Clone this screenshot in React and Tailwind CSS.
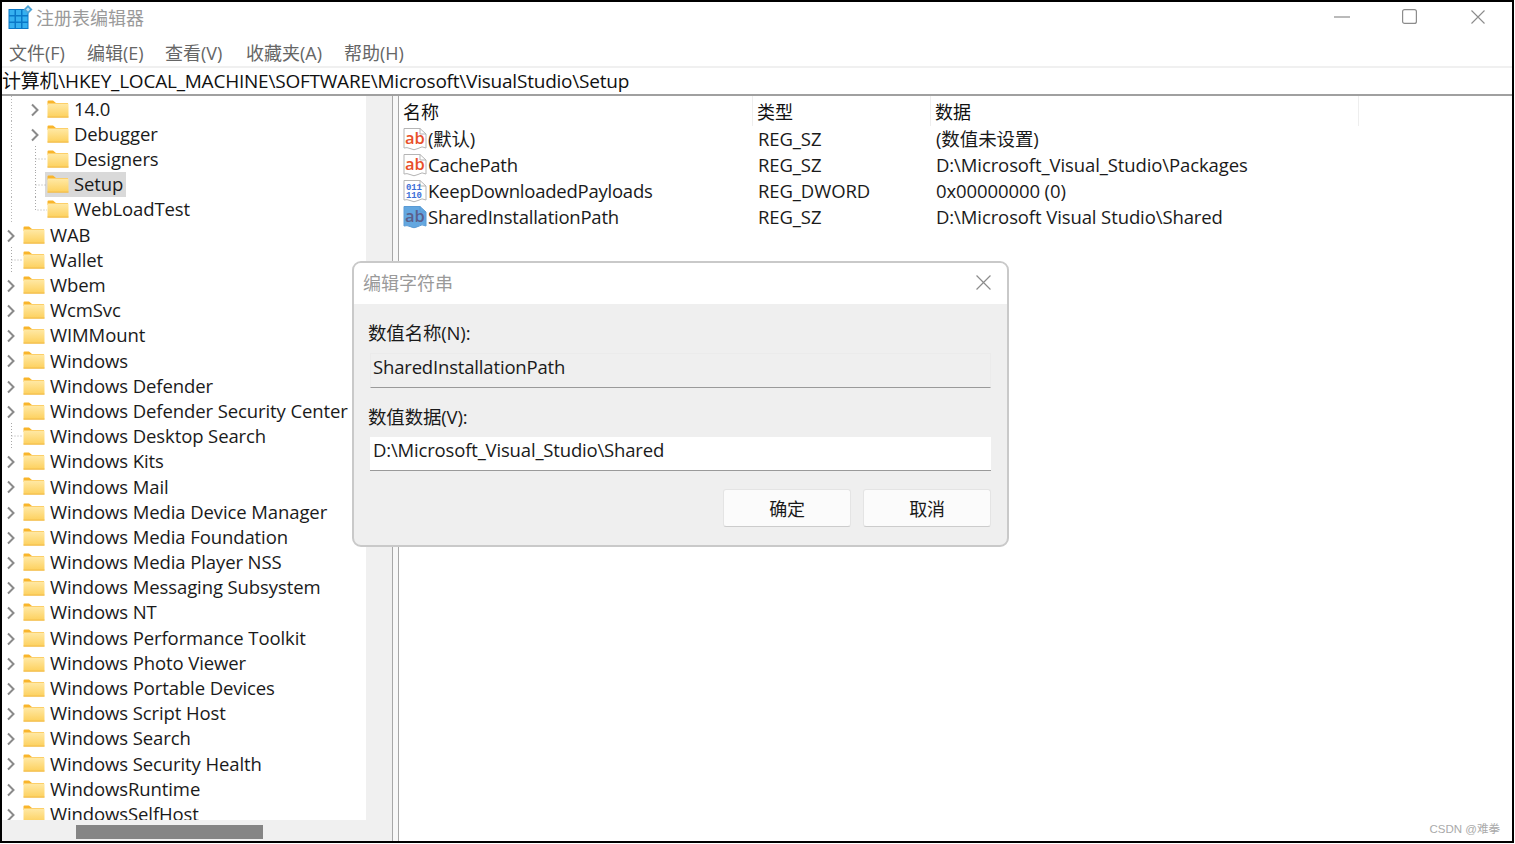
import React from "react";

const roots = ["WAB","Wallet","Wbem","WcmSvc","WIMMount","Windows","Windows Defender","Windows Defender Security Center","Windows Desktop Search","Windows Kits","Windows Mail","Windows Media Device Manager","Windows Media Foundation","Windows Media Player NSS","Windows Messaging Subsystem","Windows NT","Windows Performance Toolkit","Windows Photo Viewer","Windows Portable Devices","Windows Script Host","Windows Search","Windows Security Health","WindowsRuntime","WindowsSelfHost"];
const leaves = new Set(["Wallet","Windows Desktop Search"]);

function Folder() {
  return (
    <svg width="22" height="18" viewBox="0 0 22 18" className="shrink-0">
      <defs>
        <linearGradient id="fg" x1="0" y1="0" x2="0" y2="1">
          <stop offset="0" stopColor="#ffe9a6" />
          <stop offset="1" stopColor="#fdd05c" />
        </linearGradient>
      </defs>
      <path d="M0.5 1.5 Q0.5 0.5 1.5 0.5 H6 L9 3 H21 V5 H0.5Z" fill="#f9b52b" />
      <rect x="0.5" y="3.5" width="21" height="14" rx="0.5" fill="url(#fg)" />
      <rect x="0.5" y="16.6" width="21" height="1" fill="#f0b848" />
    </svg>
  );
}

function Chevron() {
  return (
    <svg width="10" height="14" viewBox="0 0 10 14" className="shrink-0 mt-[2px]">
      <path d="M2 1.5 L7.5 7 L2 12.5" fill="none" stroke="#8a8a8a" strokeWidth="2" />
    </svg>
  );
}

function Cell({ kind }) {
  return (
    <div className="w-[21px] h-full shrink-0 relative flex items-center justify-start pl-[4px]">
      {kind === "chevron" ? <Chevron /> : (
        <svg width="21" height="26" viewBox="0 0 21 26" className="absolute left-0 top-0">
          <path d={kind === "last" ? "M9.5 0 V13 H21" : "M9.5 0 V26 M9.5 13 H21"} fill="none" stroke="#a8a8a8" strokeWidth="1" strokeDasharray="1 2" />
        </svg>
      )}
    </div>
  );
}

function Guide() {
  return (
    <div className="w-[24px] h-full shrink-0">
      <svg width="24" height="26" viewBox="0 0 24 26">
        <path d="M9.5 0 V26" fill="none" stroke="#b8b8b8" strokeWidth="1" strokeDasharray="1 2" />
      </svg>
    </div>
  );
}

function Row({ name, child, kind, selected }) {
  return (
    <div className="h-[25.2px] flex items-center shrink-0 text-[18.5px] tracking-[-0.1px] text-[#1a1a1a] whitespace-nowrap">
      {child && <Guide />}
      <Cell kind={kind} />
      <div className={selected ? "flex items-center h-full bg-[#d9d9d9] pl-[2px] -ml-[2px] pr-[3px]" : "flex items-center h-full"}>
        <Folder />
        <span className="ml-[5px]">{name}</span>
      </div>
    </div>
  );
}

function AbIcon({ blue }) {
  return (
    <svg width="24" height="25" viewBox="0 0 24 25" className="shrink-0">
      <path d="M1 1.5 H17 L23 7 V21 Q19 18.5 15 21.5 Q11 24 7 21.5 Q4 20 1 21Z" fill={blue ? "#63a7e0" : "#fff"} stroke={blue ? "#5a9bd5" : "#b5b5b5"} strokeWidth="1" />
      <path d="M17 1.5 V7 H23" fill="none" stroke={blue ? "#5a9bd5" : "#b5b5b5"} strokeWidth="1" />
      <text x="2" y="16.5" fontSize="16.5" fontWeight="600" fontFamily="'Open Sans',sans-serif" fill={blue ? "#5b5f8c" : "#e8502b"}>ab</text>
    </svg>
  );
}

function BinIcon() {
  return (
    <svg width="24" height="25" viewBox="0 0 24 25" className="shrink-0">
      <path d="M1 1.5 H17 L23 7 V21 Q19 18.5 15 21.5 Q11 24 7 21.5 Q4 20 1 21Z" fill="#fff" stroke="#b5b5b5" strokeWidth="1" />
      <path d="M17 1.5 V7 H23" fill="none" stroke="#b5b5b5" strokeWidth="1" />
      <text x="3" y="11" fontSize="9" fontWeight="700" fontFamily="'Liberation Mono',monospace" fill="#3b6fd8">011</text>
      <text x="3" y="18.5" fontSize="9" fontWeight="700" fontFamily="'Liberation Mono',monospace" fill="#3b6fd8">110</text>
    </svg>
  );
}

const values = [
  { icon: <AbIcon />, name: "(默认)", type: "REG_SZ", data: "(数值未设置)" },
  { icon: <AbIcon />, name: "CachePath", type: "REG_SZ", data: "D:\\Microsoft_Visual_Studio\\Packages" },
  { icon: <BinIcon />, name: "KeepDownloadedPayloads", type: "REG_DWORD", data: "0x00000000 (0)" },
  { icon: <AbIcon blue />, name: "SharedInstallationPath", type: "REG_SZ", data: "D:\\Microsoft Visual Studio\\Shared" },
];

function Logo() {
  return (
    <svg width="25" height="25" viewBox="0 0 25 25" className="shrink-0">
      <rect x="0.5" y="4" width="20" height="20" fill="#0a78c8" />
      <g fill="#35b0f0">
        <rect x="1.5" y="5" width="5" height="5" /><rect x="8" y="5" width="5" height="5" /><rect x="14.5" y="5" width="5" height="5" />
        <rect x="1.5" y="11.5" width="5" height="5" /><rect x="8" y="11.5" width="5" height="5" /><rect x="14.5" y="11.5" width="5" height="5" />
        <rect x="1.5" y="18" width="5" height="5" /><rect x="8" y="18" width="5" height="5" /><rect x="14.5" y="18" width="5" height="5" />
      </g>
      <path d="M20 0 L24.5 4.5 L20 9 L15.5 4.5Z" fill="#4aa3d8" />
      <path d="M20 2.5 L22 4.5 L20 6.5 L18 4.5Z" fill="#bfe3f5" />
    </svg>
  );
}

function X({ size = 14, color = "#8c8c8c" }) {
  return (
    <svg width={size} height={size} viewBox="0 0 14 14">
      <path d="M0.5 0.5 L13.5 13.5 M13.5 0.5 L0.5 13.5" stroke={color} strokeWidth="1.1" fill="none" />
    </svg>
  );
}

export default function App() {
  return (
    <div className="w-[1514px] h-[843px] border-2 border-black bg-white flex flex-col overflow-hidden relative [font-family:'Open_Sans','Noto_Sans_CJK_SC',sans-serif]">
      <div className="h-[33px] shrink-0 flex items-center pl-[6px] pb-[2px] text-[18px] text-[#9a9a9a] [font-family:'Noto_Sans_CJK_SC',sans-serif]">
        <Logo />
        <span className="ml-[3px]">注册表编辑器</span>
        <div className="ml-auto flex items-center pr-[27px] mb-[2px]">
          <svg width="16" height="14" viewBox="0 0 16 14"><path d="M0 7 H16" stroke="#8c8c8c" strokeWidth="1.2" /></svg>
          <svg width="15" height="15" viewBox="0 0 15 15" className="ml-[52px]"><rect x="0.6" y="0.6" width="13.8" height="13.8" rx="2" fill="none" stroke="#8c8c8c" strokeWidth="1.2" /></svg>
          <div className="ml-[54px] flex"><X /></div>
        </div>
      </div>
      <div className="h-[33px] shrink-0 flex items-center pl-[7px] pt-[5px] text-[18px] text-[#666] border-b-2 border-[#f0f0f0]">
        <span className="w-[78px]">文件(F)</span>
        <span className="w-[78px]">编辑(E)</span>
        <span className="w-[81px]">查看(V)</span>
        <span className="w-[98px]">收藏夹(A)</span>
        <span>帮助(H)</span>
      </div>
      <div className="h-[28px] shrink-0 flex items-center pt-[1px] text-[19px] tracking-[-0.22px] text-[#111] border-b-2 border-[#a0a0a0] whitespace-nowrap">
        计算机\HKEY_LOCAL_MACHINE\SOFTWARE\Microsoft\VisualStudio\Setup
      </div>
      <div className="flex-1 flex min-h-0">
        <div className="w-[364px] flex flex-col shrink-0 min-h-0">
          <div className="flex-1 flex flex-col overflow-hidden min-h-0">
            <Row name="14.0" child kind="chevron" />
            <Row name="Debugger" child kind="chevron" />
            <Row name="Designers" child kind="tee" />
            <Row name="Setup" child kind="tee" selected />
            <Row name="WebLoadTest" child kind="last" />
            {roots.map((r) => (
              <Row key={r} name={r} kind={leaves.has(r) ? "tee" : "chevron"} />
            ))}
          </div>
          <div className="h-[21px] shrink-0 bg-[#f0f0f0] pt-[5px] pl-[74px]">
            <div className="w-[187px] h-[14px] bg-[#858585]" />
          </div>
        </div>
        <div className="w-[27px] shrink-0 bg-[#f0f0f0] border-r border-[#a8a8a8]" />
        <div className="w-[6px] shrink-0 bg-[#f8f8f8] border-r border-[#a8a8a8]" />
        <div className="flex-1 flex flex-col min-w-0">
          <div className="h-[30px] flex items-center text-[18px] text-[#111] [font-family:'Noto_Sans_CJK_SC',sans-serif]">
            <div className="w-[354px] pl-[4px] pt-[1px] border-r border-[#eeeeee] h-full flex items-center">名称</div>
            <div className="w-[178px] pl-[4px] pt-[1px] border-r border-[#eeeeee] h-full flex items-center">类型</div>
            <div className="w-[428px] pl-[4px] pt-[1px] border-r border-[#eeeeee] h-full flex items-center">数据</div>
          </div>
          {values.map((v) => (
            <div key={v.name} className="h-[26px] flex items-center text-[18.5px] tracking-[-0.1px] text-[#1a1a1a] whitespace-nowrap">
              <div className="w-[354px] pl-[4px] flex items-center">
                {v.icon}
                <span className="ml-[1px] tracking-[-0.23px]">{v.name}</span>
              </div>
              <div className="w-[178px] pl-[5px]">{v.type}</div>
              <div className="pl-[5px]">{v.data}</div>
            </div>
          ))}
        </div>
      </div>

      <div className="absolute left-[350px] top-[259px] w-[657px] h-[286px] rounded-[9px] border-2 border-[#c9c9c9] bg-[#efefef] overflow-hidden flex flex-col text-[#1a1a1a]">
        <div className="h-[41px] bg-white flex items-center justify-between pl-[9px] pr-[16px] pb-[3px] shrink-0 text-[18px] text-[#9a9a9a] [font-family:'Noto_Sans_CJK_SC',sans-serif]">
          <span>编辑字符串</span>
          <X size={15} />
        </div>
        <div className="flex-1 flex flex-col px-[16px] tracking-[-0.17px]">
          <div className="mt-[16px] h-[26px] -ml-[2px] flex items-center text-[18.5px]">数值名称(N):</div>
          <div className="mt-[7px] h-[35px] shrink-0 flex items-center pl-[2px] pb-[8px] text-[18.5px] border border-[#ebebeb] border-b-[#9a9a9a] bg-[#efefef]">SharedInstallationPath</div>
          <div className="mt-[16px] h-[26px] -ml-[2px] flex items-center text-[18.5px]">数值数据(V):</div>
          <div className="mt-[7px] h-[34px] shrink-0 flex items-center pl-[3px] pb-[7px] text-[18.5px] bg-white border-b border-[#9a9a9a]">D:\Microsoft_Visual_Studio\Shared</div>
          <div className="mt-[18px] flex justify-end gap-[12px] text-[18px] [font-family:'Noto_Sans_CJK_SC',sans-serif]">
            <div className="w-[128px] h-[38px] rounded-[3px] bg-[#fbfbfb] border border-[#e4e4e4] border-b-[#cccccc] flex items-center justify-center">确定</div>
            <div className="w-[128px] h-[38px] rounded-[3px] bg-[#fbfbfb] border border-[#e4e4e4] border-b-[#cccccc] flex items-center justify-center">取消</div>
          </div>
        </div>
      </div>

      <div className="absolute right-[12px] bottom-[3px] text-[11.5px] text-[#aaaaaa] [font-family:'Liberation_Sans','Noto_Sans_CJK_SC',sans-serif]">CSDN @难拳</div>
    </div>
  );
}
